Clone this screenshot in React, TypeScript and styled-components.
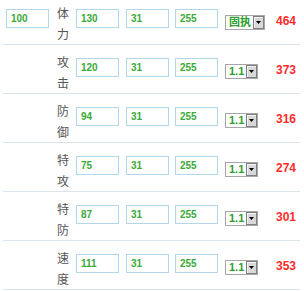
import React from "react"
import styled, { createGlobalStyle } from "styled-components"

const GlobalStyle = createGlobalStyle`
  html, body {
    margin: 0;
    padding: 0;
    background: #fff;
    overflow: hidden;
  }
`

interface StatRow {
  label: [string, string]
  base?: string
  level: string
  iv: string
  ev: string
  nature: string
  total: number
}

const rows: StatRow[] = [
  { label: ["体", "力"], base: "100", level: "130", iv: "31", ev: "255", nature: "固执", total: 464 },
  { label: ["攻", "击"], level: "120", iv: "31", ev: "255", nature: "1.1", total: 373 },
  { label: ["防", "御"], level: "94", iv: "31", ev: "255", nature: "1.1", total: 316 },
  { label: ["特", "攻"], level: "75", iv: "31", ev: "255", nature: "1.1", total: 274 },
  { label: ["特", "防"], level: "87", iv: "31", ev: "255", nature: "1.1", total: 301 },
  { label: ["速", "度"], level: "111", iv: "31", ev: "255", nature: "1.1", total: 353 },
]

const App: React.FunctionComponent = () => {
  return (
    <>
      <GlobalStyle />
      <Table>
        {rows.map((row, i) => (
          <Row key={i}>
            <Cell>{row.base && <StatInput defaultValue={row.base} readOnly />}</Cell>
            <Label>
              <span>{row.label[0]}</span>
              <span>{row.label[1]}</span>
            </Label>
            <Cell>
              <StatInput defaultValue={row.level} readOnly />
            </Cell>
            <Cell>
              <StatInput defaultValue={row.iv} readOnly />
            </Cell>
            <Cell>
              <StatInput defaultValue={row.ev} readOnly />
            </Cell>
            <Cell>
              <Select>
                <SelectValue>{row.nature}</SelectValue>
                <SelectButton>
                  <svg width="5" height="3" viewBox="0 0 5 3">
                    <path d="M0 0h5L2.5 3z" fill="#000" />
                  </svg>
                </SelectButton>
              </Select>
            </Cell>
            <Total>{row.total}</Total>
          </Row>
        ))}
      </Table>
    </>
  )
}

const Table = styled.div`
  margin: -4px 4px 0 3px;
  display: flex;
  flex-direction: column;
`

const Row = styled.div`
  display: grid;
  grid-template-columns: 51px 22px 50px 49px 50px 50px 1fr;
  align-items: start;
  height: 48px;
  border-bottom: 1px solid #dae5ef;
`

const Cell = styled.div`
  display: flex;
`

const Label = styled.div`
  display: flex;
  flex-direction: column;
  margin-top: 6px;
  padding-left: 3px;
  font-family: "Noto Sans CJK SC", sans-serif;
  font-size: 12px;
  line-height: 21px;
  color: #555;
`

const StatInput = styled.input`
  box-sizing: border-box;
  width: 43px;
  height: 19px;
  margin: 13px 0 0 0;
  padding: 0 0 1px 4px;
  border: 1px solid #b2d6ea;
  outline: none;
  background: #fff;
  font-family: "Liberation Sans", Arial, sans-serif;
  font-weight: bold;
  font-size: 10px;
  color: #3aaa3a;

  ${Cell}:first-child & {
    margin-left: 3px;
  }
`

const Select = styled.div`
  box-sizing: border-box;
  display: inline-flex;
  align-items: stretch;
  height: 15px;
  margin-top: 19px;
  border: 1px solid #a7a6aa;
  background: #fff;
`

const SelectValue = styled.span`
  padding: 0 2px 0 3px;
  font-family: "Liberation Sans", "Noto Sans CJK SC", sans-serif;
  font-weight: bold;
  font-size: 11px;
  line-height: 13px;
  color: #2e9e2e;
`

const SelectButton = styled.span`
  box-sizing: border-box;
  width: 11px;
  display: flex;
  align-items: center;
  justify-content: center;
  background: #d8d8d8;
  border: 1px solid #7f7f7f;
  box-shadow: inset 1px 1px 0 #f4f4f4;
`

const Total = styled.div`
  margin-top: 18px;
  padding-right: 4px;
  text-align: right;
  font-family: "Liberation Sans", Arial, sans-serif;
  font-weight: bold;
  font-size: 12px;
  line-height: 14px;
  color: #ff2b2b;
`

export default App
